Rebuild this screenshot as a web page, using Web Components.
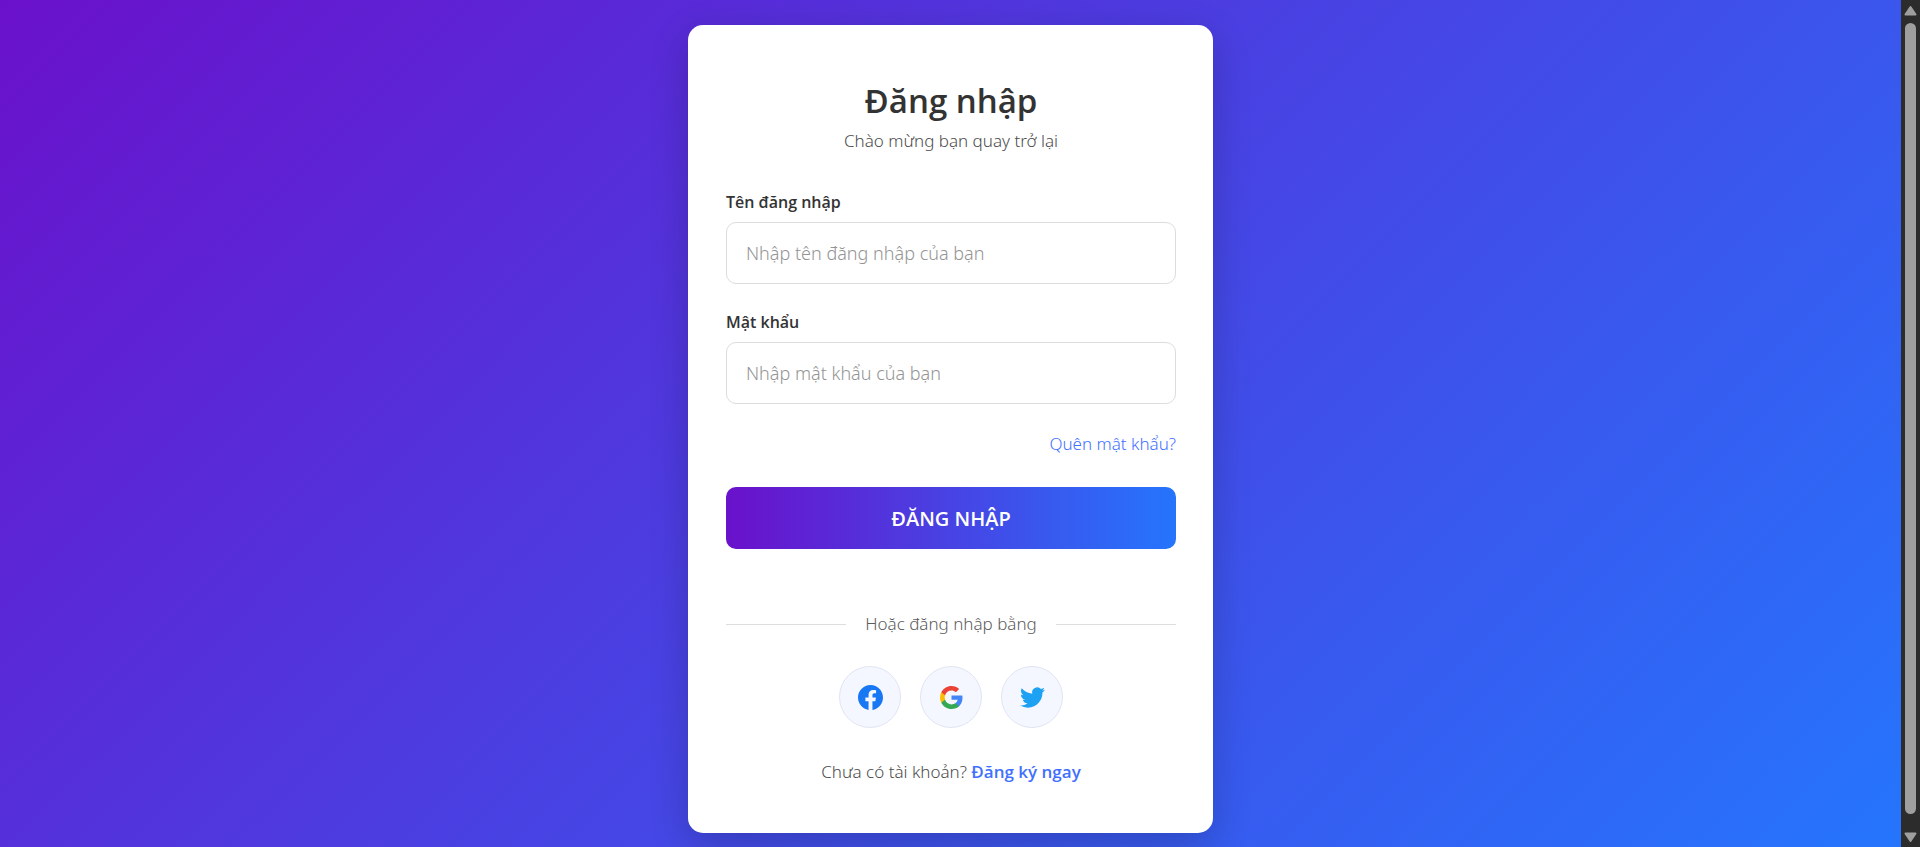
<!DOCTYPE html>
<html lang="vi">
<head>
<meta charset="utf-8">
<meta name="viewport" content="width=device-width, initial-scale=1">
<title>Đăng nhập</title>
<style>
  body {
    margin: 0;
    font-family: "Noto Sans", "Open Sans", sans-serif;
    font-weight: 300;
    font-size: 17px;
    line-height: 24px;
    color: #4c4c4c;
    --strong-font: "Open Sans", "Noto Sans", sans-serif;
    --accent: #3f70ff;
    --line: #ddd;
  }
</style>
</head>
<body>
<login-page>
  <login-card heading="Đăng nhập" subheading="Chào mừng bạn quay trở lại">
    <text-field label="Tên đăng nhập" placeholder="Nhập tên đăng nhập của bạn" type="text" name="username"></text-field>
    <text-field label="Mật khẩu" placeholder="Nhập mật khẩu của bạn" type="password" name="password"></text-field>
    <forgot-link>Quên mật khẩu?</forgot-link>
    <submit-button>ĐĂNG NHẬP</submit-button>
    <text-divider>Hoặc đăng nhập bằng</text-divider>
    <social-row>
      <social-button label="Facebook">
        <svg width="25" height="25" viewBox="0 0 16 16"><path fill="#1877f2" d="M16 8.049c0-4.446-3.582-8.05-8-8.05C3.58 0-.002 3.603-.002 8.05c0 4.017 2.926 7.347 6.75 7.951v-5.625h-2.03V8.05H6.75V6.275c0-2.017 1.195-3.131 3.022-3.131.876 0 1.791.157 1.791.157v1.98h-1.009c-.993 0-1.303.621-1.303 1.258v1.51h2.218l-.354 2.326H9.25V16c3.824-.604 6.75-3.934 6.75-7.951"/></svg>
      </social-button>
      <social-button label="Google">
        <svg width="25" height="25" viewBox="0 0 24 24"><path fill="#4285f4" d="M22.56 12.25c0-.78-.07-1.53-.2-2.25H12v4.26h5.92c-.26 1.37-1.04 2.53-2.21 3.31v2.77h3.57c2.08-1.92 3.28-4.74 3.28-8.09z"/><path fill="#34a853" d="M12 23c2.97 0 5.46-.98 7.28-2.66l-3.57-2.77c-.98.66-2.23 1.06-3.71 1.06-2.86 0-5.29-1.93-6.16-4.53H2.18v2.84C3.99 20.53 7.7 23 12 23z"/><path fill="#fbbc05" d="M5.84 14.09c-.22-.66-.35-1.36-.35-2.09s.13-1.43.35-2.09V7.07H2.18C1.43 8.55 1 10.22 1 12s.43 3.45 1.18 4.93l2.85-2.22.81-.62z"/><path fill="#ea4335" d="M12 5.38c1.62 0 3.06.56 4.21 1.64l3.15-3.15C17.45 2.09 14.97 1 12 1 7.7 1 3.99 3.47 2.18 7.07l3.66 2.84c.87-2.6 3.3-4.53 6.16-4.53z"/></svg>
      </social-button>
      <social-button label="Twitter">
        <svg width="25" height="25" viewBox="0 0 24 24"><path fill="#1da1f2" d="M23.953 4.57a10 10 0 01-2.825.775 4.958 4.958 0 002.163-2.723c-.951.555-2.005.959-3.127 1.184a4.92 4.92 0 00-8.384 4.482C7.69 8.095 4.067 6.13 1.64 3.162a4.822 4.822 0 00-.666 2.475c0 1.71.87 3.213 2.188 4.096a4.904 4.904 0 01-2.228-.616v.06a4.923 4.923 0 003.946 4.827 4.996 4.996 0 01-2.212.085 4.936 4.936 0 004.604 3.417 9.867 9.867 0 01-6.102 2.105c-.39 0-.779-.023-1.17-.067a13.995 13.995 0 007.557 2.209c9.053 0 13.998-7.496 13.998-13.985 0-.21 0-.42-.015-.63A9.935 9.935 0 0024 4.59z"/></svg>
      </social-button>
    </social-row>
    <register-line prompt="Chưa có tài khoản?">Đăng ký ngay</register-line>
  </login-card>
</login-page>

<script>
  // Base class: fills an open shadow root with the subclass's styles and markup.
  class Base extends HTMLElement {
    constructor() {
      super();
      this.attachShadow({ mode: 'open' });
    }
    connectedCallback() {
      this.shadowRoot.innerHTML =
        `<style>*{box-sizing:border-box}${this.css()}</style>${this.html()}`;
    }
    attr(name) { return this.getAttribute(name) || ''; }
  }

  customElements.define('login-page', class extends Base {
    css() { return `
      :host { display: grid; grid-template-columns: minmax(0, 1fr) 19px; min-height: 100vh; }
      main { display: flex; justify-content: center; align-items: flex-start; padding: 25px 25px 14px;
             background: linear-gradient(135deg, #6a11cb 0%, #2575fc 100%); }`; }
    html() { return `<main><slot></slot></main><scroll-track></scroll-track>`; }
  });

  customElements.define('scroll-track', class extends Base {
    css() { return `
      :host { display: flex; flex-direction: column; align-items: center; background: #2c2c2c; }
      svg { flex: none; display: block; fill: #9f9f9f; stroke: #9f9f9f; stroke-width: 2; stroke-linejoin: round; }
      .thumb { flex: 1; width: 11px; border-radius: 6px; background: #9f9f9f; margin-bottom: 10px; }`; }
    html() { return `
      <svg width="19" height="23" viewBox="0 0 19 23" aria-hidden="true"><path d="M9.5 7 14.5 14.5H4.5z"/></svg>
      <div class="thumb"></div>
      <svg width="19" height="23" viewBox="0 0 19 23" aria-hidden="true"><path d="M9.5 17 14.5 9.5H4.5z"/></svg>`; }
  });

  customElements.define('login-card', class extends Base {
    css() { return `
      :host { display: block; box-sizing: border-box; width: 100%; max-width: 525px; padding: 51px 37px 49px 38px;
              background: #fff; border-radius: 15px; box-shadow: 0 12px 38px rgba(0, 0, 0, .2); }
      header { text-align: center; margin-bottom: 34px; }
      h1 { margin: 0; font: 600 33px/50px var(--strong-font); color: #333; }
      p { margin: 0; line-height: 30px; }`; }
    html() { return `
      <header><h1>${this.attr('heading')}</h1><p>${this.attr('subheading')}</p></header>
      <form><slot></slot></form>`; }
  });

  customElements.define('text-field', class extends Base {
    css() { return `
      :host { display: block; margin-bottom: 26px; }
      label { display: block; margin-bottom: 8px; font: 600 16px/24px var(--strong-font); color: #333; }
      input { display: block; width: 100%; height: 62px; padding: 0 19px; border: 1px solid var(--line);
              border-radius: 10px; background: #fff; color: #333; font: inherit; font-size: 18px; outline: none; }
      input:focus { border-color: var(--accent); }
      input::placeholder { color: #949494; opacity: 1; }`; }
    html() {
      const name = this.attr('name');
      return `<label for="${name}">${this.attr('label')}</label>
        <input id="${name}" name="${name}" type="${this.attr('type')}" placeholder="${this.attr('placeholder')}">`;
    }
  });

  customElements.define('forgot-link', class extends Base {
    css() { return `
      :host { display: block; text-align: right; margin: 28px 0 31px; }
      a { color: var(--accent); text-decoration: none; }`; }
    html() { return `<a href="#"><slot></slot></a>`; }
  });

  customElements.define('submit-button', class extends Base {
    css() { return `
      :host { display: block; }
      button { display: block; width: 100%; height: 62px; padding: 2px 0 0; border: 0; border-radius: 10px; cursor: pointer;
               background: linear-gradient(90deg, #6a11cb, #2575fc); color: #fff;
               font: 600 20px/24px var(--strong-font); }`; }
    html() { return `<button type="submit"><slot></slot></button>`; }
  });

  customElements.define('text-divider', class extends Base {
    css() { return `
      :host { display: flex; align-items: center; gap: 19px; margin: 63px 0 30px; color: #5c5c5c; }
      :host::before, :host::after { content: ""; flex: 1; height: 1px; background: var(--line); }`; }
    html() { return `<span><slot></slot></span>`; }
  });

  customElements.define('social-row', class extends Base {
    css() { return `:host { display: flex; justify-content: center; gap: 19px; margin-bottom: 32px; }`; }
    html() { return `<slot></slot>`; }
  });

  customElements.define('social-button', class extends Base {
    css() { return `
      :host { display: block; }
      button { display: flex; align-items: center; justify-content: center; width: 62px; height: 62px; padding: 0;
               border: 1px solid #e1e5f2; border-radius: 50%; background: #f4f7ff; cursor: pointer; }
      ::slotted(svg) { display: block; }`; }
    html() { return `<button type="button" aria-label="${this.attr('label')}"><slot></slot></button>`; }
  });

  customElements.define('register-line', class extends Base {
    css() { return `
      :host { display: block; text-align: center; }
      a { color: var(--accent); text-decoration: none; font-family: var(--strong-font); font-weight: 600; }`; }
    html() { return `${this.attr('prompt')} <a href="#"><slot></slot></a>`; }
  });
</script>
</body>
</html>
